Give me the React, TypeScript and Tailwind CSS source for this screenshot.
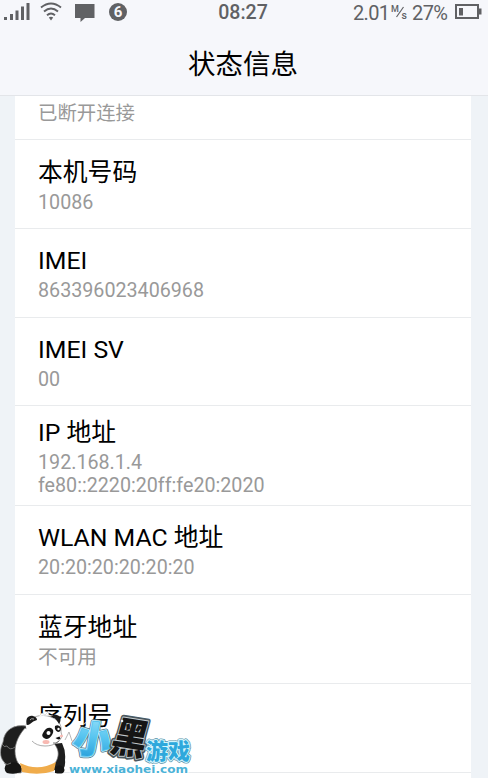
interface InfoItem {
  title: string
  lines: string[]
  className: string
}

const items: InfoItem[] = [
  { title: '本机号码', lines: ['10086'], className: 'h-[89px] pt-[17px]' },
  { title: 'IMEI', lines: ['863396023406968'], className: 'h-[89px] pt-4' },
  { title: 'IMEI SV', lines: ['00'], className: 'h-[88px] pt-4' },
  { title: 'IP 地址', lines: ['192.168.1.4', 'fe80::2220:20ff:fe20:2020'], className: 'h-[100px] pt-[11px]' },
  { title: 'WLAN MAC 地址', lines: ['20:20:20:20:20:20'], className: 'h-[89px] pt-4' },
  { title: '蓝牙地址', lines: ['不可用'], className: 'h-[89px] pt-[17px]' },
  { title: '序列号', lines: [], className: 'h-[89px] pt-[17px]' },
]

function StatusBar() {
  return (
    <div className="flex h-[26px] items-center justify-between pl-1 pr-[6px] text-[#606164]">
      <svg width="126" height="26" viewBox="4 0 126 26" fill="currentColor">
        {/* Signal */}
        <path d="M4 17h3v3H4zM10 14h3v6h-3zM15.500 10.500h3V20h-3zM21 6.500h3V20h-3zM26.500 3h3v17h-3z" />
        {/* Wi-Fi */}
        <g fill="none" stroke="currentColor" strokeWidth="1.900">
          <path d="M41 7.500q10-8 20 0" />
          <path d="M44 11.500q7-6 14 0" />
          <path d="M47 15.300q4-3.600 8 0" />
        </g>
        <path d="M48.800 17.600q2.200-1.500 4.400 0L51 20.500z" />
        {/* Message */}
        <path d="M75 4h19.500v14H85l-4.500 4v-4H75z" />
        <circle cx="118" cy="12" r="9" />
        <text x="118" y="17.300" textAnchor="middle" fill="#f6f7fb" fontFamily="Roboto, sans-serif" fontSize="15" fontWeight="700">
          6
        </text>
      </svg>
      <span className="ml-[4px] text-[19.600px] font-medium leading-[26px]">08:27</span>
      <svg width="130" height="26" viewBox="352 0 130 26" fill="currentColor" fontFamily="Roboto, sans-serif">
        <text x="353" y="19.500" fontSize="20" textLength="37">2.01</text>
        <text x="391" y="12" fontSize="9" fontWeight="500">M</text>
        <path d="m396.500 17 7-10" stroke="currentColor" strokeWidth="1.200" />
        <text x="401.500" y="18.500" fontSize="10.500" fontWeight="500">s</text>
        <text x="412" y="19.500" fontSize="20" textLength="36">27%</text>
        {/* Battery */}
        <path d="M456 5h22v13h-22z" fill="none" stroke="currentColor" strokeWidth="2" />
        <path d="M459 8h4v7.500h-4zM479 8.500h2.500v6H479z" />
      </svg>
    </div>
  )
}

function InfoRow({ item }: { item: InfoItem }) {
  return (
    <div className={`border-b border-[#e9ebed] pl-[23px] ${item.className}`}>
      <h2 className="mb-[2px] text-[24.8px] leading-8 text-black">{item.title}</h2>
      {item.lines.map((line) => (
        <p key={line} className="text-[19.700px] leading-[23px] text-[#999]">
          {line}
        </p>
      ))}
    </div>
  )
}

function PandaLogo() {
  return (
    <svg className="absolute bottom-0 left-0" width="200" height="88" viewBox="0 690 200 88">
      <defs>
        <linearGradient id="blue" x1="0" y1="0" x2="0" y2="1">
          <stop offset="0" stopColor="#a5e5fa" />
          <stop offset="0.500" stopColor="#58c5f0" />
          <stop offset="1" stopColor="#1c97d6" />
        </linearGradient>
      </defs>

      {/* Panda */}
      <path d="M26 726C14 724 4 730 3 742c-3 6-4 15 1 20l2 3q-3 8 4 8h11l8-22z" fill="#1e1e1e" stroke="#999" strokeWidth="0.700" />
      <path d="M53 744l9-1q4 8 3 17 1 10-6 12l-9-4z" fill="#1e1e1e" />
      <path d="M25 728c-8 9-12 20-9 30 2 8 8 12 21 12 14 0 20-7 21-14 1-6-2-10-5-14z" fill="#fff" stroke="#777" strokeWidth="0.700" />
      <path d="M20 763q18 9 36-1l-2 9q-15 5-32 1z" fill="#f0ac4b" />
      <path d="M6 765q8-5 13-1 4 4 1 8-5 3-13 1-4-4-1-8M55 768q4-5 8-1 3 3 0 6-3 1-8 0z" fill="#151515" />
      <path d="M26 725c3-8 15-12 25-8 8 3 11 8 10 15l1 4c-2 6-8 10-17 10-9-1-15-4-18-10z" fill="#fff" />
      <path d="M26 725c3-8 15-12 25-8 8 3 11 8 10 15l1 4c-2 6-8 10-17 10-6 0-10-2-13-5" fill="none" stroke="#888" strokeWidth="0.700" />
      <path d="M27 725c-2-6 1-10 6-9q4 1 4 4-4 1-7 4-1 1-3 1M51 716q4-3 8 0 3 4 0 8-3-6-8-8" fill="#1b1b1b" />
      <path d="M30 720q1-2 4-1" fill="none" stroke="#aaa" />
      <path d="M43 733q3-6 8-5 4 2 1 7-4 6-8 3-3-2-1-5M55 726q4-2 6 2 0 4-3 4-4-2-3-6" fill="#171717" />
      <circle cx="48.500" cy="733" r="2" fill="#fff" />
      <circle cx="58.500" cy="729" r="1.200" fill="#fff" />
      <ellipse cx="46" cy="742" rx="3.500" ry="2" fill="#f8b9b2" />
      <ellipse cx="61.500" cy="736" rx="1.500" ry="1.200" fill="#f8b9b2" />
      <path d="m55.500 738 4-1.500 1 2q-2 2-5-.5" fill="#111" />
      <path d="M53 743q3 1 6-2" fill="none" stroke="#555" strokeWidth="0.800" />
      <path d="M2 744q2 4 5 2 3 5 8 1M4 763q3 3 7 0" fill="none" stroke="#888" strokeWidth="0.800" />
      <path d="M39 716l3-3 3 2 4-4-1 5 5-1" fill="#fff" stroke="#ccc" strokeWidth="0.600" />
      <path d="m65 740 4-8 3 9" fill="none" stroke="#999" strokeWidth="0.700" />

      {/* Name, each glyph stacked from its outer outline inwards */}
      <g fontFamily='"Noto Sans CJK SC", sans-serif' fontWeight="900" strokeLinejoin="round" paintOrder="stroke" textAnchor="middle">
        <g transform="translate(90 753) skewX(-5) rotate(6)" fontSize="37">
          <text fill="#487185" stroke="#487185" strokeWidth="5">小</text>
          <text fill="#c5effc" stroke="#c5effc" strokeWidth="3.500">小</text>
          <text fill="url(#blue)" stroke="#58c5f0" strokeWidth="2">小</text>
        </g>
        <g transform="translate(126 753) skewX(-7) rotate(9) scale(0.92 1.06)" fontSize="39">
          <text fill="#4b5961" stroke="#4b5961" strokeWidth="5">黑</text>
          <text fill="#c3cacd" stroke="#c3cacd" strokeWidth="1.800">黑</text>
          <text fill="#151515">黑</text>
        </g>
        <g fontSize="22">
          <text x="168" y="759" fill="#5b91a9" stroke="#5b91a9" strokeWidth="3.500">游戏</text>
          <text x="168" y="759" fill="#d3f5fd" stroke="#d3f5fd" strokeWidth="2.200">游戏</text>
          <text x="168" y="759" fill="#2ea8dc">游戏</text>
        </g>
      </g>
      <path d="M84 724q3-3 6-2" fill="none" stroke="#fff" strokeOpacity="0.650" strokeWidth="1.200" />
      <circle cx="122" cy="721" r="1.300" fill="#e8eef0" />
      <text
        x="69"
        y="773"
        textLength="119"
        lengthAdjust="spacingAndGlyphs"
        fontFamily='"DejaVu Sans", sans-serif'
        fontSize="10.500"
        fontWeight="700"
        fill="#4bb2d7"
        stroke="#fff"
        strokeWidth="2"
        paintOrder="stroke"
      >
        www.xiaohei.com
      </text>
    </svg>
  )
}

export default function App() {
  return (
    <div className="relative flex h-[778px] w-[488px] flex-col overflow-hidden bg-[#eff3f7] font-[Roboto,'Noto_Sans_CJK_SC',sans-serif]">
      <header className="h-24 shrink-0 border-b border-[#e3e5e9] bg-[#f6f7fb]">
        <StatusBar />
        <h1 className="pr-[2px] pt-[19px] text-center text-[27.500px] leading-10 text-black">状态信息</h1>
      </header>

      <main className="ml-[15px] mr-[17px] flex-1 overflow-hidden bg-white">
        <div className="h-11 border-b border-[#e9ebed] pl-[23px] pt-[6px]">
          <p className="text-[19.400px] leading-[23px] text-[#999]">已断开连接</p>
        </div>
        {items.map((item) => (
          <InfoRow key={item.title} item={item} />
        ))}
      </main>

      <PandaLogo />
    </div>
  )
}
